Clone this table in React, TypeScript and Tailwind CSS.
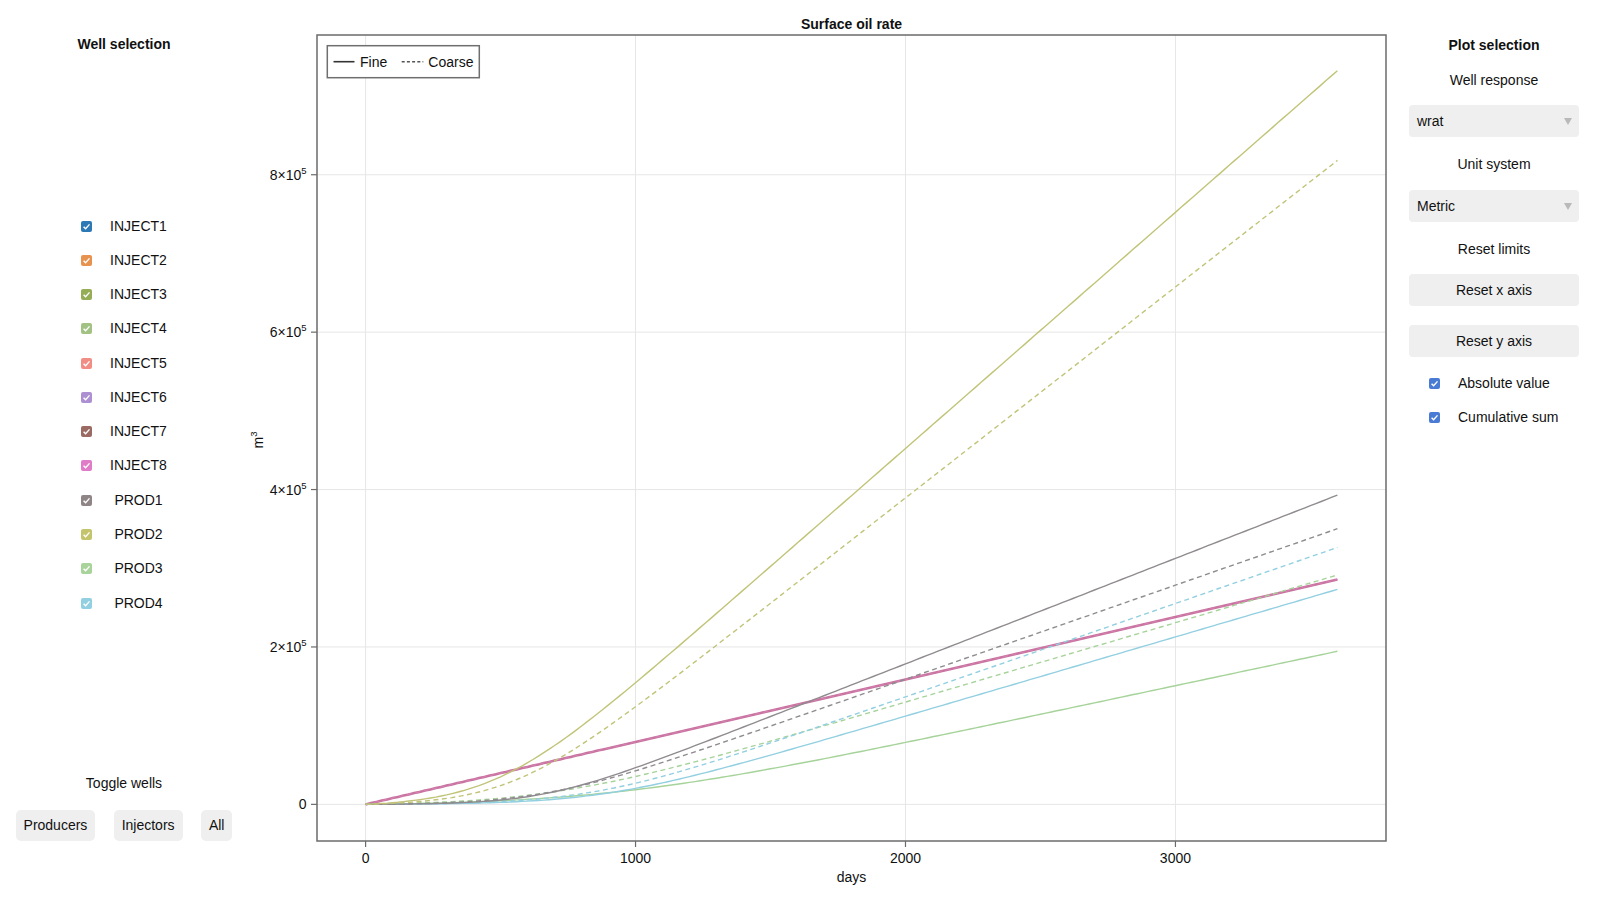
import React from "react";

// Well colours, read off the checkboxes
const WELLS = [
  { name: "INJECT1", color: "#2c79b5" },
  { name: "INJECT2", color: "#e8924f" },
  { name: "INJECT3", color: "#95ad55" },
  { name: "INJECT4", color: "#a2c283" },
  { name: "INJECT5", color: "#f28d85" },
  { name: "INJECT6", color: "#ad90d1" },
  { name: "INJECT7", color: "#9b6b63" },
  { name: "INJECT8", color: "#e07bc7" },
  { name: "PROD1", color: "#8f8587" },
  { name: "PROD2", color: "#c4c46d" },
  { name: "PROD3", color: "#a8d49b" },
  { name: "PROD4", color: "#92d0e1" },
];

// plot box in page pixels and its data limits (y in units of 1e5 m³)
const X0 = 317;
const X1 = 1386;
const Y0 = 35;
const Y1 = 841;
const XMIN = -180;
const XMAX = 3780;
const YMIN = -0.4655;
const YMAX = 9.7755;

const px = (t: number) => X0 + ((t - XMIN) / (XMAX - XMIN)) * (X1 - X0);
const py = (v: number) => Y1 - ((v - YMIN) / (YMAX - YMIN)) * (Y1 - Y0);

function softplus(a: number, t0: number, s: number) {
  const base = Math.log1p(Math.exp(-t0 / s));
  return (t: number) => a * s * (Math.log1p(Math.exp((t - t0) / s)) - base);
}

function pathOf(f: (t: number) => number) {
  const parts: string[] = [];
  for (let t = 0; t <= 3600; t += 20) {
    parts.push(`${parts.length ? "L" : "M"}${px(t).toFixed(1)} ${py(f(t)).toFixed(1)}`);
  }
  return parts.join(" ");
}

const SERIES = [
  { f: (t: number) => t * 0.0007936, color: "#c9739f", width: 2.6, dashed: false },
  { f: (t: number) => t * 0.0007936, color: "#d27fb0", width: 1.2, dashed: true },
  { f: softplus(0.000729, 912, 330), color: "#a6d39a", width: 1.4, dashed: false },
  { f: softplus(0.00101, 700, 250), color: "#a6d39a", width: 1.4, dashed: true },
  { f: softplus(0.001007, 885, 200), color: "#92cfe0", width: 1.4, dashed: false },
  { f: softplus(0.001187, 847, 200), color: "#92cfe0", width: 1.4, dashed: true },
  { f: softplus(0.00134, 666, 150), color: "#8f8b8f", width: 1.4, dashed: false },
  { f: softplus(0.001195, 665, 180), color: "#8f8b8f", width: 1.4, dashed: true },
  { f: softplus(0.003, 483, 170), color: "#c1c478", width: 1.4, dashed: false },
  { f: softplus(0.00268, 541, 165), color: "#c1c478", width: 1.4, dashed: true },
];

function Check({ color }: { color: string }) {
  return (
    <svg width="11" height="11" viewBox="0 0 11 11" className="shrink-0">
      <rect width="11" height="11" rx="2" fill={color} />
      <polyline points="2.6,5.7 4.6,7.8 8.5,3.4" fill="none" stroke="white" strokeWidth="1.4" />
    </svg>
  );
}

function Dropdown({ value }: { value: string }) {
  return (
    <div className="flex h-[32px] w-full items-center justify-between rounded-[4px] bg-[#efefef] pl-[8px] pr-[7px] text-[14px] text-[#111]">
      <span>{value}</span>
      <svg width="8" height="7" viewBox="0 0 8 7">
        <polygon points="0,0 8,0 4,7" fill="#b9b9b9" />
      </svg>
    </div>
  );
}

function Chart() {
  const yTicks = [0, 2, 4, 6, 8];
  const xTicks = [0, 1000, 2000, 3000];
  return (
    <svg width="1152" height="900" viewBox="248 0 1152 900" className="block shrink-0">
      <text x="851.5" y="28.5" textAnchor="middle" fontSize="14" fontWeight="700" fill="#111">
        Surface oil rate
      </text>

      {xTicks.map((t) => (
        <line key={t} x1={px(t)} x2={px(t)} y1={Y0} y2={Y1} stroke="#e6e6e6" strokeWidth="1" />
      ))}
      {yTicks.map((v) => (
        <line key={v} x1={X0} x2={X1} y1={py(v)} y2={py(v)} stroke="#e6e6e6" strokeWidth="1" />
      ))}

      {SERIES.map((s, i) => (
        <path
          key={i}
          d={pathOf(s.f)}
          fill="none"
          stroke={s.color}
          strokeWidth={s.width}
          strokeDasharray={s.dashed ? "5 3.5" : undefined}
          strokeLinejoin="round"
        />
      ))}

      <rect x={X0} y={Y0} width={X1 - X0} height={Y1 - Y0} fill="none" stroke="#6b6b6b" strokeWidth="1.5" />

      {yTicks.map((v) => (
        <g key={v}>
          <line x1={X0 - 6} x2={X0} y1={py(v)} y2={py(v)} stroke="#6b6b6b" strokeWidth="1.2" />
          <text x={306.5} y={py(v) + 5} textAnchor="end" fontSize="14" fill="#111">
            {v === 0 ? (
              "0"
            ) : (
              <>
                {v}×10
                <tspan fontSize="9.5" dy="-6">5</tspan>
              </>
            )}
          </text>
        </g>
      ))}
      {xTicks.map((t) => (
        <g key={t}>
          <line x1={px(t)} x2={px(t)} y1={Y1} y2={Y1 + 6} stroke="#6b6b6b" strokeWidth="1.2" />
          <text x={px(t)} y={863} textAnchor="middle" fontSize="14" fill="#111">
            {t}
          </text>
        </g>
      ))}

      <text x="851.5" y="881.5" textAnchor="middle" fontSize="14" fill="#111">
        days
      </text>
      <text x="263" y="440" textAnchor="middle" fontSize="14" fill="#111" transform="rotate(-90 263 440)">
        m<tspan fontSize="9.5" dy="-6">3</tspan>
      </text>

      {/* legend */}
      <rect x="327.3" y="45.7" width="152" height="32" fill="white" stroke="#6f6f6f" strokeWidth="1.5" />
      <line x1="333.5" x2="354.5" y1="61.7" y2="61.7" stroke="#333" strokeWidth="1.6" />
      <text x="360" y="66.7" fontSize="14" fill="#111">
        Fine
      </text>
      <line x1="401.7" x2="423.3" y1="61.7" y2="61.7" stroke="#555" strokeWidth="1.4" strokeDasharray="3 2.2" />
      <text x="428.3" y="66.7" fontSize="14" fill="#111">
        Coarse
      </text>
    </svg>
  );
}

export default function App() {
  return (
    <div className="flex h-[900px] w-[1600px] overflow-hidden bg-white font-[Liberation_Sans,Arial,sans-serif] text-[14px] leading-[17px] text-[#111]">
      {/* Well selection */}
      <div className="flex w-[248px] shrink-0 flex-col items-center pt-[36px]">
        <div className="font-bold">Well selection</div>
        <div className="mt-[156px] flex flex-col self-stretch">
          {WELLS.map((w) => (
            <div key={w.name} className="flex h-[34.27px] items-center pl-[81px]">
              <Check color={w.color} />
              <span className="w-[93px] text-center">{w.name}</span>
            </div>
          ))}
        </div>
        <div className="mt-[155px]">Toggle wells</div>
        <div className="mt-[17.5px] flex gap-[18.3px]">
          {["Producers", "Injectors", "All"].map((b) => (
            <button
              key={b}
              className="flex h-[31px] items-center rounded-[5px] bg-[#efefef] px-[8px] text-[14px] text-[#111]"
            >
              {b}
            </button>
          ))}
        </div>
      </div>

      <Chart />

      {/* Plot selection */}
      <div className="flex w-[200px] shrink-0 flex-col pt-[36.5px] pl-[9px] pr-[21px] text-center">
        <div className="font-bold">Plot selection</div>
        <div className="mt-[18px]">Well response</div>
        <div className="mt-[16.5px] text-left">
          <Dropdown value="wrat" />
        </div>
        <div className="mt-[18.5px]">Unit system</div>
        <div className="mt-[17.5px] text-left">
          <Dropdown value="Metric" />
        </div>
        <div className="mt-[18.5px]">Reset limits</div>
        <button className="mt-[16.5px] h-[32px] w-full rounded-[4px] bg-[#efefef] text-[14px] text-[#111]">
          Reset x axis
        </button>
        <button className="mt-[19px] h-[32px] w-full rounded-[4px] bg-[#efefef] text-[14px] text-[#111]">
          Reset y axis
        </button>
        <div className="mt-[17.8px] flex h-[17px] items-center pl-[20px]">
          <Check color="#4a7bd4" />
          <span className="ml-[18px]">Absolute value</span>
        </div>
        <div className="mt-[17.4px] flex h-[17px] items-center pl-[20px]">
          <Check color="#4a7bd4" />
          <span className="ml-[18px]">Cumulative sum</span>
        </div>
      </div>
    </div>
  );
}
